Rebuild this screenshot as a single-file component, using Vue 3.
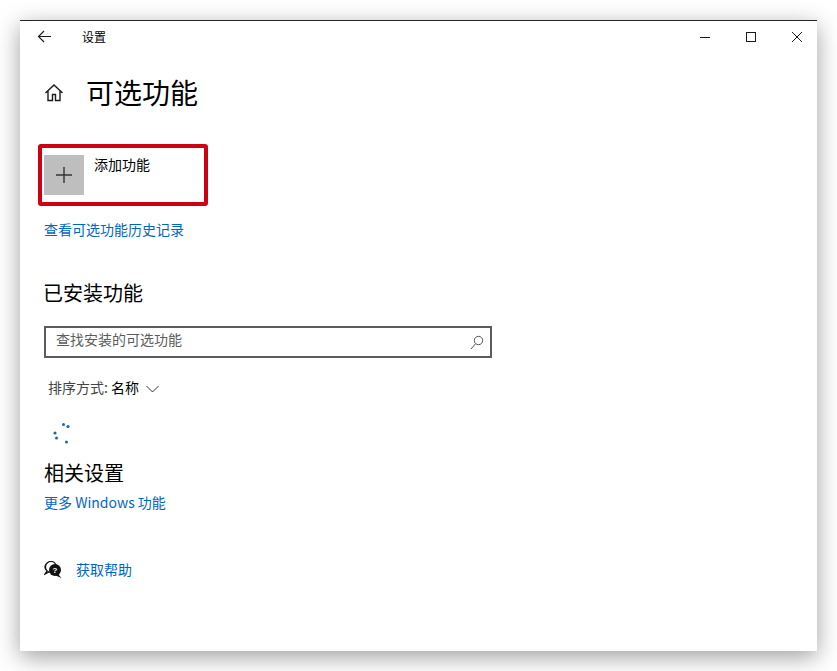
<script setup>
const dots = [
  [68, 425.5, 1.6], [63.5, 423.5, 1.5], [55, 432, 1.6], [56.5, 437, 1.5], [66.5, 441, 1.5]
]
</script>

<template>
  <div class="page">
    <div class="window">
      <header class="titlebar">
        <svg class="back" width="16" height="14" viewBox="0 0 16 14">
          <path d="M7 1 1.500 6.500 7 12M1.500 6.500H14" fill="none" stroke="#1a1a1a" stroke-width="1.100" />
        </svg>
        <span class="app-name">设置</span>
        <div class="controls">
          <svg width="12" height="12" viewBox="0 0 12 12"><path d="M1 6.500H11" stroke="#1a1a1a" /></svg>
          <svg width="12" height="12" viewBox="0 0 12 12"><rect x="1.500" y="1.500" width="9" height="9" fill="none" stroke="#1a1a1a" /></svg>
          <svg width="12" height="12" viewBox="0 0 12 12"><path d="M1 1 11 11M11 1 1 11" stroke="#1a1a1a" fill="none" /></svg>
        </div>
      </header>

      <main class="content">
        <div class="heading">
          <svg class="home" width="20" height="20" viewBox="0 0 20 20">
            <path d="M1.500 10 10 2l8.500 8M4 8v9.500h4.500v-6h3v6H16V8" fill="none" stroke="#1a1a1a" stroke-width="1.400" />
          </svg>
          <h1>可选功能</h1>
        </div>

        <div class="add-box">
          <div class="add-tile">
            <svg width="16" height="16" viewBox="0 0 16 16"><path d="M8 0V16M0 8H16" stroke="#333" stroke-width="1.400" /></svg>
          </div>
          <span class="add-label">添加功能</span>
        </div>

        <a class="link history">查看可选功能历史记录</a>

        <h2 class="installed">已安装功能</h2>

        <div class="search">
          <span class="placeholder">查找安装的可选功能</span>
          <svg width="14" height="15" viewBox="0 0 14 15">
            <circle cx="8.500" cy="5.500" r="4.200" fill="none" stroke="#555" />
            <path d="M5.500 8.800 1 14" stroke="#555" fill="none" />
          </svg>
        </div>

        <div class="sort">
          <span class="sort-label">排序方式:</span>
          <span class="sort-value">名称</span>
          <svg width="13" height="8" viewBox="0 0 13 8"><path d="M.5 1 6.500 7 12.500 1" fill="none" stroke="#333" /></svg>
        </div>

        <svg class="spinner" width="24" height="22" viewBox="52 421 24 22">
          <circle v-for="(d, i) in dots" :key="i" :cx="d[0]" :cy="d[1]" :r="d[2]" fill="#1c66b0" />
        </svg>

        <h2 class="related">相关设置</h2>
        <a class="link more">更多 Windows 功能</a>

        <div class="help">
          <svg width="18" height="17" viewBox="0 0 18 17">
            <path d="M7 1C3.500 1 1 3.200 1 6c0 1.600.8 3 2 4L1 13 5 11" fill="#fff" stroke="#111" stroke-width="1.300" />
            <circle cx="7" cy="6" r="5.500" fill="#fff" stroke="#111" stroke-width="1.200" />
            <circle cx="11" cy="9" r="6" fill="#111" />
            <path d="M14 13l3.500 4-6-2.500z" fill="#111" />
            <text x="11" y="12" font-size="8" font-weight="700" text-anchor="middle" fill="#fff" font-family="Liberation Sans">?</text>
          </svg>
          <a class="link">获取帮助</a>
        </div>
      </main>
    </div>
  </div>
</template>

<style scoped>
.page {
  width: 837px;
  height: 671px;
  box-sizing: border-box;
  padding: 20px;
  background: #fff;
  overflow: hidden;
  font-family: "Noto Sans CJK SC", "Noto Sans", sans-serif;
  color: #000;
}
.window {
  width: 797px;
  height: 631px;
  box-sizing: border-box;
  border-top: 1px solid #262626;
  background: #fff;
  box-shadow: 0 6px 22px rgba(0, 0, 0, 0.38);
  display: flex;
  flex-direction: column;
}
.titlebar {
  display: flex;
  align-items: center;
  height: 31px;
  flex: none;
  font-size: 12px;
}
.back {
  margin-left: 17px;
}
.app-name {
  margin-left: 29px;
  line-height: 31px;
}
.controls {
  margin-left: auto;
  margin-right: 14px;
  display: flex;
  gap: 34px;
}
.content {
  display: flex;
  flex-direction: column;
  align-items: flex-start;
  padding-left: 24px;
}
.heading {
  display: flex;
  align-items: center;
  height: 40px;
  margin-top: 20px;
}
.home {
  width: 20px;
  height: 20px;
  margin-top: 2px;
}
h1 {
  margin: 0 0 0 22px;
  font-size: 28px;
  font-weight: 400;
  line-height: 40px;
}
.add-box {
  box-sizing: border-box;
  width: 170px;
  height: 62px;
  margin: 32px 0 0 -6px;
  border: 4px solid #cf0012;
  border-radius: 3px;
  padding: 7px 0 0 2px;
  display: flex;
  align-items: flex-start;
}
.add-tile {
  width: 40px;
  height: 40px;
  background: #bebebe;
  display: flex;
  align-items: center;
  justify-content: center;
}
.add-label {
  margin-left: 10px;
  font-size: 14px;
  line-height: 18px;
}
.link {
  color: #0067c0;
  font-size: 14px;
  line-height: 20px;
}
.history {
  margin-top: 13px;
}
h2 {
  margin: 0;
  font-size: 20px;
  font-weight: 400;
  line-height: 28px;
}
.installed {
  margin-top: 40px;
  margin-left: -1px;
}
.search {
  box-sizing: border-box;
  width: 448px;
  height: 32px;
  margin-top: 19px;
  border: 2px solid #5c5c5c;
  display: flex;
  align-items: center;
  justify-content: space-between;
  padding: 0 6px 0 10px;
}
.placeholder {
  font-size: 14px;
  line-height: 20px;
  margin-top: -7px;
  color: #5c5c5c;
}
.sort {
  display: flex;
  align-items: center;
  height: 20px;
  margin: 19px 0 0 4px;
  font-size: 14px;
}
.sort-label {
  color: #444;
}
.sort-value {
  margin-left: 3px;
  color: #000;
}
.sort svg {
  margin-left: 7px;
  margin-top: 3px;
}
.spinner {
  margin-top: 25px;
  margin-left: 8px;
}
.related {
  margin-top: 15px;
}
.more {
  margin-top: 5px;
}
.help {
  display: flex;
  align-items: center;
  margin-top: 47px;
}
.help svg {
  margin-right: 14px;
}
</style>
